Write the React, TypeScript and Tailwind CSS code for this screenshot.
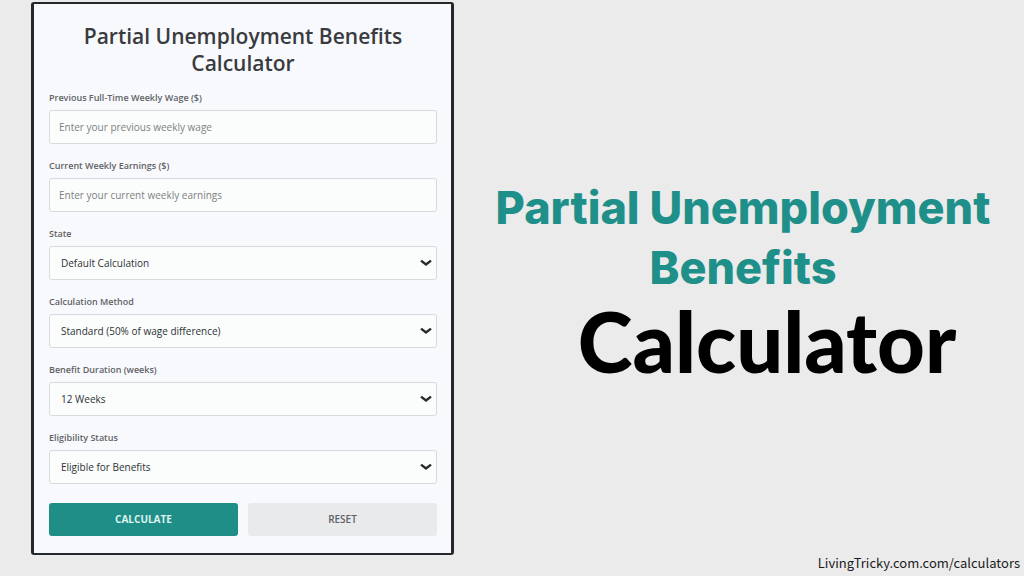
import type { ReactNode } from "react";
import { ChevronDown } from "lucide-react";

const labelClass = "text-[9px] leading-4 font-semibold text-[#5f6266]";
const fieldClass =
  "h-[34px] w-full rounded-[3px] border border-[#d8dadd] bg-[#fbfdfc] text-[10px]";

function Field({ id, label, children }: { id: string; label: string; children: ReactNode }) {
  return (
    <div className="flex flex-col gap-1">
      <label htmlFor={id} className={labelClass}>
        {label}
      </label>
      {children}
    </div>
  );
}

function TextField({ id, label, placeholder }: { id: string; label: string; placeholder: string }) {
  return (
    <Field id={id} label={label}>
      <input
        id={id}
        type="text"
        inputMode="decimal"
        placeholder={placeholder}
        className={`${fieldClass} px-[9px] text-[#333] placeholder:text-[#7c7f82]`}
      />
    </Field>
  );
}

function SelectField({ id, label, options }: { id: string; label: string; options: string[] }) {
  return (
    <Field id={id} label={label}>
      <div className="relative">
        <select id={id} className={`${fieldClass} appearance-none pr-7 pl-[11px] font-medium text-[#2e3134]`}>
          {options.map((option) => (
            <option key={option}>{option}</option>
          ))}
        </select>
        <svg
          aria-hidden="true"
          viewBox="0 0 12 8"
          fill="none"
          stroke="currentColor"
          strokeWidth="2.4"
          className="pointer-events-none absolute top-[13px] right-[5px] h-2 w-3 text-[#26292c]"
        >
          <path d="M1 1.6 6 5.4 11 1.6" />
        </svg>
      </div>
    </Field>
  );
}

export default function App() {
  return (
    <div className="flex min-h-screen bg-[#ebebeb] pl-[31px] font-['Open_Sans',sans-serif]">
      <section className="mt-[2px] w-[423px] shrink-0 self-start rounded-[3px] border-x-[3px] border-y-2 border-[#25282b] bg-[#f8f9fc] pt-[19px] pr-[14px] pb-[17px] pl-[15px]">
        <h2 className="text-center text-[21px] leading-[27px] font-semibold text-[#3a3b3e]">
          Partial Unemployment Benefits
          <br />
          Calculator
        </h2>
        <form className="mt-[13px]" onSubmit={(event) => event.preventDefault()}>
          <div className="flex flex-col gap-[14px]">
            <TextField id="wage" label="Previous Full-Time Weekly Wage ($)" placeholder="Enter your previous weekly wage" />
            <TextField id="earnings" label="Current Weekly Earnings ($)" placeholder="Enter your current weekly earnings" />
            <SelectField id="state" label="State" options={["Default Calculation"]} />
            <SelectField id="method" label="Calculation Method" options={["Standard (50% of wage difference)"]} />
            <SelectField id="duration" label="Benefit Duration (weeks)" options={["12 Weeks"]} />
            <SelectField id="status" label="Eligibility Status" options={["Eligible for Benefits"]} />
          </div>
          <div className="mt-[19px] grid grid-cols-2 gap-[10px]">
            <button type="submit" className="h-[33px] rounded-[3px] bg-[#1e8e87] text-[10px] font-bold text-[#dff3f0]">
              CALCULATE
            </button>
            <button type="reset" className="h-[33px] rounded-[3px] bg-[#e9eaec] text-[10px] font-semibold text-[#606366]">
              RESET
            </button>
          </div>
        </form>
      </section>

      <main className="flex min-w-0 grow flex-col">
        <h1 className="flex grow flex-col items-center pt-[178px] pl-2">
          <span className="text-center font-['Inter',sans-serif] text-[45px] leading-[60px] font-extrabold text-[#1e8f89]">
            <span className="whitespace-nowrap">Partial Unemployment</span>
            <br />
            Benefits
          </span>
          <span className="ml-12 font-['Lato',sans-serif] text-[83px] leading-[86px] font-black text-black">
            Calculator
          </span>
        </h1>
        <footer className="pr-1 pb-[2px] text-right font-['Noto_Sans_CJK_SC',sans-serif] text-[13px] leading-[22px] text-[#1c1c1c]">
          <a href="#calculators">LivingTricky.com.com/calculators</a>
        </footer>
      </main>
    </div>
  );
}
